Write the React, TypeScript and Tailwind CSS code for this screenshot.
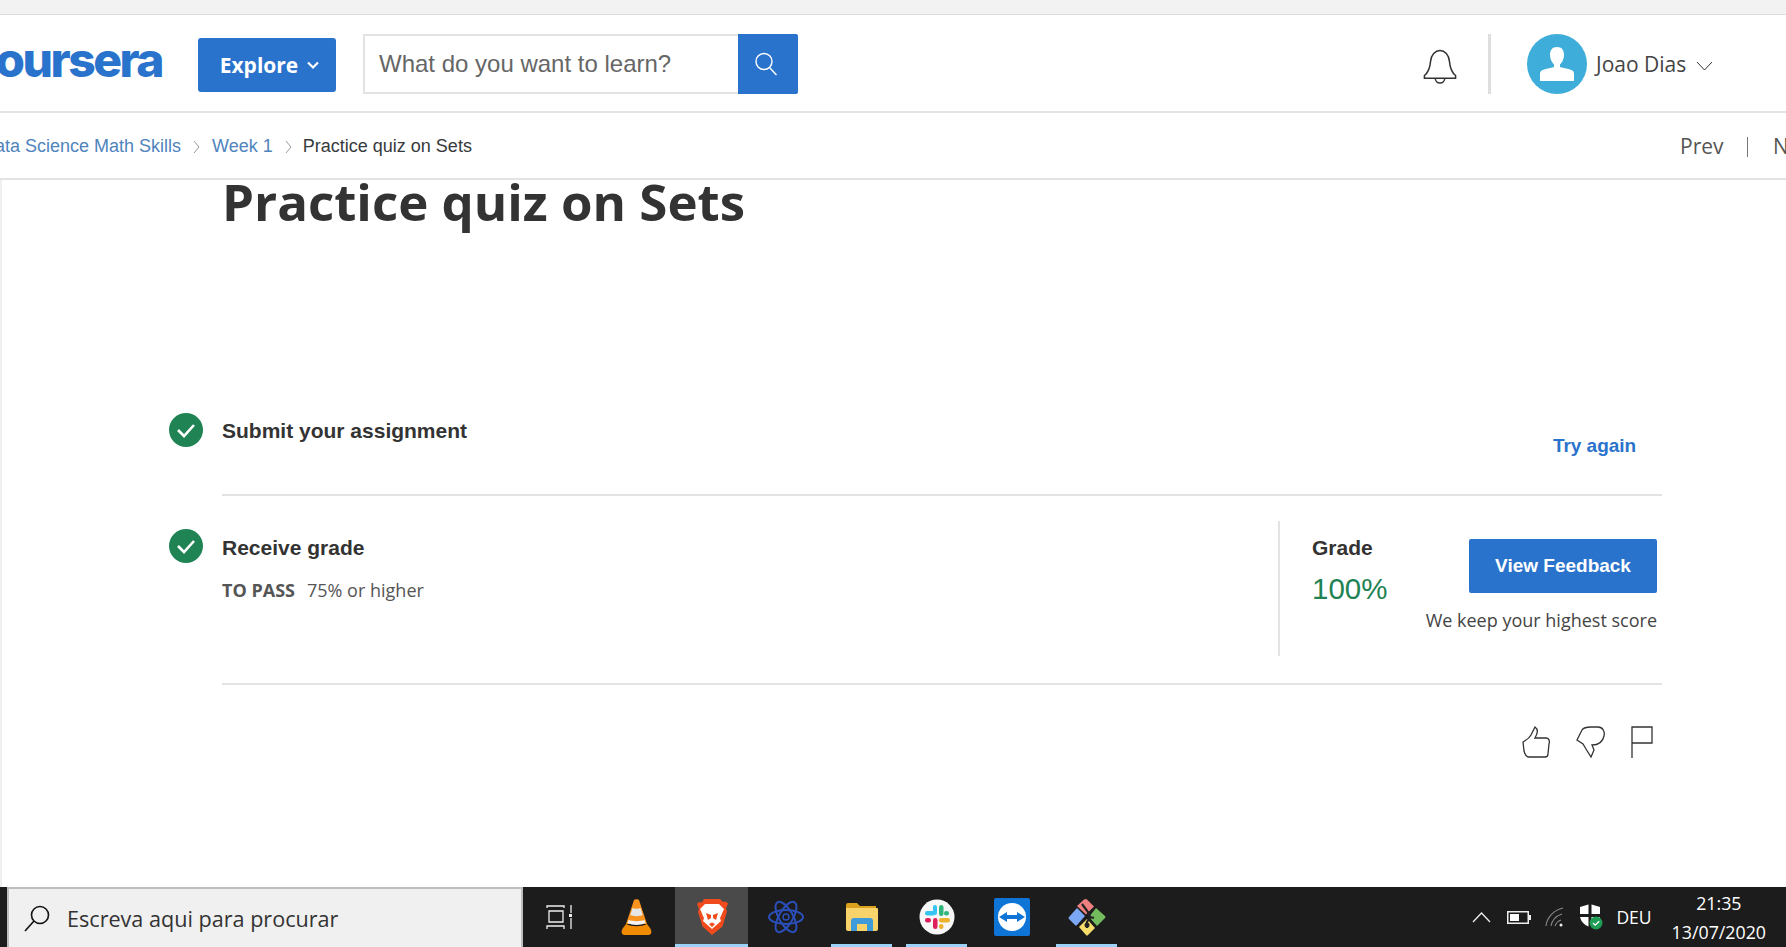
import React from "react";

const sans = "font-['Liberation_Sans',Arial,sans-serif]";
const open = "font-['Open_Sans',sans-serif]";

function Check() {
  return (
    <div className="flex h-[34px] w-[34px] shrink-0 items-center justify-center rounded-full bg-[#1f8354]">
      <svg width="20" height="15" viewBox="0 0 20 15" fill="none" stroke="#fff" strokeWidth="2.6">
        <path d="M2 7l6 6L18 2" />
      </svg>
    </div>
  );
}

function TaskIcon({ children, active, bar, w = 61 }: { children: React.ReactNode; active?: boolean; bar?: boolean; w?: number }) {
  return (
    <div className={`relative flex h-full shrink-0 items-center justify-center ${active ? "bg-[#4a4a4a]" : ""}`} style={{ width: w }}>
      {children}
      {bar && <div className="absolute bottom-0 left-0 right-0 h-[3px] bg-[#9bd2f7]" />}
    </div>
  );
}

export default function App() {
  return (
    <div className="flex h-screen w-full flex-col overflow-hidden bg-white text-[#333]">
      <div className="h-[15px] shrink-0 border-b border-[#dcdcdc] bg-[#f2f2f2]" />

      <header className="flex h-[98px] shrink-0 items-center overflow-hidden border-b-2 border-[#e3e3e3] pt-[2px]">
        <div className="mb-[8px] ml-[-40px] w-[202px] shrink-0 text-right font-['Inter',sans-serif] text-[48px] font-extrabold leading-none tracking-[-2.5px] text-[#2a73cc]">coursera</div>
        <div className={`${open} ml-[36px] mt-[2px] flex h-[54px] w-[138px] shrink-0 items-center justify-center gap-[8px] rounded-[3px] bg-[#2a73cc] pl-[6px] pt-[1px] text-[21px] font-bold text-white`}>
          Explore
          <svg width="14" height="9" viewBox="0 0 14 9" fill="none" stroke="#fff" strokeWidth="2.2"><path d="M2 1.500L7 6.500l5-5" /></svg>
        </div>
        <div className="ml-[27px] flex h-[60px] w-[435px] shrink-0">
          <div className={`${sans} flex flex-1 items-center border-2 border-r-0 border-[#e3e3e3] pl-[14px] text-[24px] text-[#666]`}>What do you want to learn?</div>
          <div className="flex w-[60px] items-center justify-center rounded-r-[2px] bg-[#2a73cc]">
            <svg className="mr-[4px]" width="26" height="26" viewBox="0 0 26 26" fill="none" stroke="#fff" strokeWidth="1.4"><circle cx="11" cy="10.5" r="8" /><path d="M16.5 16.5l7 7.5" /></svg>
          </div>
        </div>
        <svg className="ml-[625px] mt-[6px] shrink-0" width="34" height="36" viewBox="0 0 36 38" fill="none" stroke="#333" strokeWidth="1.6">
          <path d="M1.500 31h33v-3c-5-4-6-9-6.500-15C27.500 6 23 1.500 18 1.500S8.500 6 8 13c-.5 6-1.500 11-6.500 15z" />
          <path d="M13 31a5 5 0 0 0 10 0" />
        </svg>
        <div className="ml-[31px] h-[60px] w-[3px] shrink-0 bg-[#dedede]" />
        <div className="ml-[36px] flex h-[60px] w-[60px] shrink-0 items-center justify-center rounded-full bg-[#3fadda]">
          <svg width="36" height="38" viewBox="0 0 36 38" fill="#fff">
            <path d="M18 2c-5 0-7 3.500-7 8 0 4.500 2 7.500 4 9.500V22c-4 1.500-14 1.500-14 6.500V36h34v-7.500c0-5-10-5-14-6.500v-2.500c2-2 4-5 4-9.500C25 5.500 23 2 18 2z" />
          </svg>
        </div>
        <div className={`${open} ml-[9px] mt-[2px] shrink-0 text-[21px] text-[#444]`}>Joao Dias</div>
        <svg className="ml-[10px] mt-[4px] shrink-0" width="17" height="10" viewBox="0 0 17 10" fill="none" stroke="#333" strokeWidth="1"><path d="M1 1l7.500 8L16 1" /></svg>
      </header>

      <nav className="flex h-[67px] shrink-0 items-center overflow-hidden border-b-2 border-[#e3e3e3] pt-[2px]">
        <div className={`${sans} ml-[-18px] flex shrink-0 items-center text-[18px] text-[#4f84bd]`}>
          <span>Data Science Math Skills</span>
          <svg className="mx-[12px]" width="7" height="14" viewBox="0 0 7 14" fill="none" stroke="#999" strokeWidth="1"><path d="M1 1l5 6-5 6" /></svg>
          <span>Week 1</span>
          <svg className="ml-[12px] mr-[11px]" width="7" height="14" viewBox="0 0 7 14" fill="none" stroke="#999" strokeWidth="1"><path d="M1 1l5 6-5 6" /></svg>
          <span className="text-[#373a3c]">Practice quiz on Sets</span>
        </div>
        <div className={`${open} ml-auto mr-[-12px] flex shrink-0 items-center text-[21px] text-[#555]`}>
          <span>Prev</span>
          <span className="ml-[23px] mr-[25px] h-[20px] w-[1.500px] bg-[#777]" />
          <span className="w-[25px] overflow-hidden">Next</span>
        </div>
      </nav>

      <main className="min-h-0 flex-1 border-l-2 border-[#efefef] pl-[220px] pr-[124px]">
        <h1 className={`${open} mt-[-13px] text-[51px] font-bold leading-[68px] text-[#333]`}>Practice quiz on Sets</h1>

        <div className="relative mt-[178px] flex h-[83px] justify-between border-b-2 border-[#e3e3e3]">
          <div className="absolute left-[-53px] top-0"><Check /></div>
          <div className={`${sans} pt-[6px] text-[21px] font-bold leading-[24px] text-[#333]`}>Submit your assignment</div>
          <div className={`${sans} mr-[26px] pt-[21px] text-[19px] font-bold leading-[24px] tracking-[-0.05px] text-[#2a73cc]`}>Try again</div>
        </div>

        <div className="relative flex h-[189px] border-b-2 border-[#e3e3e3] pt-[25px]">
          <div className="absolute left-[-53px] top-[33px]"><Check /></div>
          <div className="flex-1 pt-[15px]">
            <div className={`${sans} text-[21px] font-bold leading-[24px] text-[#333]`}>Receive grade</div>
            <div className={`${open} mt-[18px] text-[18px] leading-[24px] text-[#555]`}>
              <span className="font-bold">TO PASS</span>
              <span className="ml-[12px]">75% or higher</span>
            </div>
          </div>
          <div className="flex h-[135px] w-[384px] border-l-2 border-[#e3e3e3] pl-[32px] pr-[5px]">
            <div className="pt-[15px]">
              <div className={`${sans} text-[21px] font-bold leading-[24px] text-[#333]`}>Grade</div>
              <div className={`${sans} mt-[9px] text-[29.500px] leading-[40px] text-[#1f8354]`}>100%</div>
            </div>
            <div className="ml-auto flex flex-col items-end pt-[18px]">
              <div className={`${sans} flex h-[54px] w-[188px] items-center justify-center rounded-[2px] bg-[#2a73cc] text-[19px] font-bold text-white`}>View Feedback</div>
              <div className={`${open} mt-[14px] text-[18px] leading-[26px] text-[#444]`}>We keep your highest score</div>
            </div>
          </div>
        </div>

        <div className="flex justify-end gap-[25px] pr-[9px] pt-[41px]">
          <svg width="30" height="32" viewBox="0 0 30 32" fill="none" stroke="#333" strokeWidth="1.3">
            <path d="M2 16c3-2 6-3 8-7l4-8c3 2 3 6 0 11h11c3 0 4 3 3 6l-1 10c0 2-1 3-3 3H8c-3 0-4-2-5-6z" />
          </svg>
          <svg width="30" height="32" viewBox="0 0 30 32" fill="none" stroke="#333" strokeWidth="1.3">
            <path d="M1 14l5-10C8 1 12 1 15 1h7c5 0 7 5 6 9-1 5-5 9-12 9l2 5-3 7-5-8-3-5z" />
          </svg>
          <svg width="22" height="32" viewBox="0 0 22 32" fill="none" stroke="#333" strokeWidth="1.3">
            <path d="M1 32V1h20v16H1" />
          </svg>
        </div>
      </main>

      <footer className="flex h-[60px] shrink-0 items-stretch bg-[#1c1c1c]">
        <div className={`${open} ml-[7px] flex w-[516px] shrink-0 items-center border-2 border-b-0 border-[#bdbdbd] bg-[#f0f0f0] pl-[14px] text-[21.600px] text-[#333]`}>
          <svg width="28" height="28" viewBox="0 0 28 28" fill="none" stroke="#111" strokeWidth="1.6"><circle cx="17" cy="11" r="8.500" /><path d="M11 17L2 27" /></svg>
          <span className="ml-[16px] pt-[2px]">Escreva aqui para procurar</span>
        </div>
        <div className="flex w-[72px] shrink-0 items-center justify-center">
          <svg width="27" height="24" viewBox="0 0 27 24" fill="none" stroke="#eee" strokeWidth="1.300">
            <path d="M1 3V1h17v2M3 6h14v11H3zM1 24v-3h17v3M25 0v8M25 13v11" />
            <rect x="23" y="9" width="3" height="3" fill="#eee" stroke="none" />
          </svg>
        </div>
        <div className="flex items-stretch pl-[2px]">
          <TaskIcon w={78}>
            <svg width="31" height="36" viewBox="0 0 31 36">
              <path d="M13 1c1-1 4-1 5 0l8 24H5z" fill="#f7931e" />
              <path d="M11.500 9c2 1 6 1 8 0l2.200 7c-3 1.500-9.400 1.500-12.400 0z" fill="#e6e6e6" />
              <path d="M5 25c6 3 15 3 21 0l3 4c2 3 2 6-1 7H3c-3-1-3-4-1-7z" fill="#f08a00" />
              <path d="M7.500 21c4 1.500 12 1.500 16 0l1 3c-5 2.500-13 2.500-18 0z" fill="#f3f3f3" />
            </svg>
          </TaskIcon>
          <TaskIcon w={73} active bar>
            <svg width="32" height="38" viewBox="0 0 32 38">
              <path d="M8 1h16l3 3 3-.5 2 2-2 5 1 3-4.500 15L16 37 6.500 28.500 2 14l1-3-2-5 2-2 3 .5z" fill="#f04a1d" />
              <path d="M9 6h14l5 5-3 7-1 2 1 3-9 8-9-8 1-3-1-2-3-7z" fill="#fff" />
              <path d="M10 15l5 2v3l-3 2zM22 15l-5 2v3l3 2zM13 26l3-1.500 3 1.500-3 3z" fill="#f04a1d" />
            </svg>
          </TaskIcon>
          <TaskIcon w={76}>
            <svg width="36" height="36" viewBox="0 0 36 36" fill="none" stroke="#2b4fb8" strokeWidth="2">
              <ellipse cx="18" cy="18" rx="17" ry="7" />
              <ellipse cx="18" cy="18" rx="17" ry="7" transform="rotate(60 18 18)" />
              <ellipse cx="18" cy="18" rx="17" ry="7" transform="rotate(120 18 18)" />
              <circle cx="18" cy="18" r="3" strokeWidth="1.500" />
            </svg>
          </TaskIcon>
          <div className="w-[7px]" />
          <TaskIcon w={61} bar>
            <svg width="34" height="30" viewBox="0 0 34 30">
              <path d="M1 3a2 2 0 0 1 2-2h9l3 3h16v4H1z" fill="#dca21d" />
              <path d="M1 6h31a1 1 0 0 1 1 1v20a2 2 0 0 1-2 2H3a2 2 0 0 1-2-2z" fill="#f8d26a" />
              <path d="M6 29V19a3 3 0 0 1 3-3h16a3 3 0 0 1 3 3v10h-6v-7H12v7z" fill="#3d9bd9" />
            </svg>
          </TaskIcon>
          <div className="w-[14px]" />
          <TaskIcon w={61} bar>
            <svg width="36" height="36" viewBox="0 0 36 36">
              <circle cx="18" cy="18" r="17.500" fill="#f7f7f7" />
              <rect x="14" y="6" width="4" height="10" rx="2" fill="#36c5f0" />
              <rect x="6" y="12" width="10" height="4.500" rx="2.200" fill="#36c5f0" />
              <rect x="20" y="6" width="4.500" height="11" rx="2.200" fill="#2eb67d" />
              <rect x="25" y="12" width="5" height="4.500" rx="2.200" fill="#2eb67d" />
              <rect x="20" y="19" width="11" height="4.500" rx="2.200" fill="#ecb22e" />
              <rect x="20" y="25" width="4.500" height="5" rx="2.200" fill="#ecb22e" />
              <rect x="14" y="19" width="4.500" height="11" rx="2.200" fill="#e01e5a" />
              <rect x="6" y="19" width="6" height="4.500" rx="2.200" fill="#e01e5a" />
            </svg>
          </TaskIcon>
          <TaskIcon w={89}>
            <svg width="36" height="38" viewBox="0 0 36 38">
              <rect width="36" height="38" rx="2" fill="#0e74d6" />
              <circle cx="18" cy="19" r="14" fill="#fff" />
              <path d="M5 19l8-5v3h10v-3l8 5-8 5v-3H13v3z" fill="#0e74d6" />
            </svg>
          </TaskIcon>
          <TaskIcon w={61} bar>
            <svg width="38" height="38" viewBox="0 0 38 38">
              <path d="M9 8l7-6.500q2-1 3 0l7 7-8 8z" fill="#ee8080" />
              <path d="M1 19l8-9 8 8-8 9q-1 1-2 0l-6-6q-1-1 0-2z" fill="#7ba7f5" />
              <path d="M28 10l9 8q1 1 0 2l-8 8-8-9z" fill="#73bd5e" />
              <path d="M19 21l8 9-7 7q-1 1-2 0l-7-8z" fill="#f6dd6b" />
              <path d="M14 6l6 8 2 5 4 1M22 18l-1 4-2 1M19 23v7" fill="none" stroke="#222" strokeWidth="2.200" />
              <circle cx="19" cy="27" r="2.500" fill="#222" />
            </svg>
          </TaskIcon>
        </div>
        <div className={`${open} ml-auto flex shrink-0 items-center pr-[20px] text-white`}>
          <svg width="19" height="11" viewBox="0 0 19 11" fill="none" stroke="#eee" strokeWidth="1.300"><path d="M1 10l8.500-9L18 10" /></svg>
          <svg className="ml-[16px]" width="24" height="13" viewBox="0 0 24 13"><rect x=".75" y=".75" width="20.500" height="11.500" fill="none" stroke="#eee" strokeWidth="1.500" /><rect x="3" y="3" width="9" height="7" fill="#fff" /><rect x="22" y="4" width="2" height="5" fill="#eee" /></svg>
          <svg className="ml-[14px]" width="20" height="20" viewBox="0 0 20 20" fill="none" stroke="#888" strokeWidth="1.100"><path d="M1 19C2 10 9 3 18 1M6 19c1-6 5-10 11-12M10 19c1-3 3-5 6-6" /><circle cx="16" cy="18" r="1.500" fill="#eee" stroke="none" /></svg>
          <svg className="ml-[14px]" width="24" height="26" viewBox="0 0 24 26">
            <path d="M11 0L1 3v8c0 6 4 10 10 12 6-2 10-6 10-12V3z" fill="#fff" />
            <path d="M9.500 0h3v10h8.500v3h-8.500v10h-3V13H1v-3h8.500z" fill="#1c1c1c" />
            <circle cx="17" cy="19" r="6.500" fill="#1f9d55" />
            <path d="M14 19l2.200 2.200 4-4" fill="none" stroke="#fff" strokeWidth="1.300" />
          </svg>
          <span className="ml-[13px] text-[17.500px]">DEU</span>
          <div className="ml-[20px] flex flex-col items-center pt-[1px] text-[17.800px] leading-[29px]">
            <span>21:35</span>
            <span>13/07/2020</span>
          </div>
        </div>
      </footer>
    </div>
  );
}
